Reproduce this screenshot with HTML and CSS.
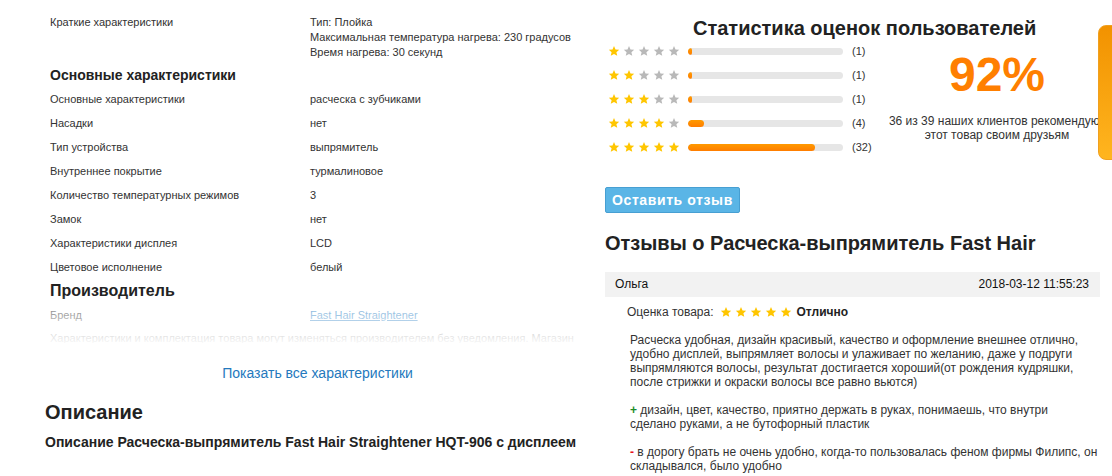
FILE: index.html
```html
<!DOCTYPE html>
<html lang="ru">
<head>
    <meta charset="UTF-8">
    <title>Расческа-выпрямитель Fast Hair Straightener</title>
    <link rel="stylesheet" href="styles.css">
</head>
<body>
    <svg width="0" height="0" class="defs">
        <symbol id="star" viewBox="0 0 24 24">
            <path d="M12 1.8l3 7 7.4.6-5.6 4.9 1.7 7.4L12 17.8l-6.5 3.9 1.7-7.4-5.6-4.9 7.4-.6z"/>
        </symbol>
    </svg>

    <div class="page">
        <div class="left">
            <div class="specs">
                <div class="spec-row">
                    <div class="spec-name">Краткие характеристики</div>
                    <div class="spec-value">Тип: Плойка<br>Максимальная температура нагрева: 230 градусов<br>Время нагрева: 30 секунд</div>
                </div>
                <h3 class="spec-group">Основные характеристики</h3>
                <div class="spec-row"><div class="spec-name">Основные характеристики</div><div class="spec-value">расческа с зубчиками</div></div>
                <div class="spec-row"><div class="spec-name">Насадки</div><div class="spec-value">нет</div></div>
                <div class="spec-row"><div class="spec-name">Тип устройства</div><div class="spec-value">выпрямитель</div></div>
                <div class="spec-row"><div class="spec-name">Внутреннее покрытие</div><div class="spec-value">турмалиновое</div></div>
                <div class="spec-row"><div class="spec-name">Количество температурных режимов</div><div class="spec-value">3</div></div>
                <div class="spec-row"><div class="spec-name">Замок</div><div class="spec-value">нет</div></div>
                <div class="spec-row"><div class="spec-name">Характеристики дисплея</div><div class="spec-value">LCD</div></div>
                <div class="spec-row"><div class="spec-name">Цветовое исполнение</div><div class="spec-value">белый</div></div>
                <h3 class="spec-group big">Производитель</h3>
                <div class="spec-row"><div class="spec-name">Бренд</div><div class="spec-value"><a href="#">Fast Hair Straightener</a></div></div>
                <p class="disclaimer">Характеристики и комплектация товара могут изменяться производителем без уведомления. Магазин не несет ответственности за изменения, внесенные производителем.</p>
                <div class="fade"></div>
            </div>
            <a class="show-all" href="#">Показать все характеристики</a>
            <h2 class="desc-title">Описание</h2>
            <h4 class="desc-sub">Описание Расческа-выпрямитель Fast Hair Straightener HQT-906 с дисплеем</h4>
        </div>

        <div class="right">
            <h2 class="stats-title">Статистика оценок пользователей</h2>
            <div class="stats">
                <div class="rows" id="rows"></div>
                <div class="recommend">
                    <div class="percent">92%</div>
                    <div class="rec-text">36 из 39 наших клиентов рекомендуют<br>этот товар своим друзьям</div>
                </div>
            </div>

            <button class="btn-review">Оставить отзыв</button>

            <h2 class="reviews-title">Отзывы о Расческа-выпрямитель Fast Hair</h2>

            <div class="review">
                <div class="review-head">
                    <span class="author">Ольга</span>
                    <span class="date">2018-03-12 11:55:23</span>
                </div>
                <div class="review-rating">
                    Оценка товара:
                    <span class="stars">
                        <svg class="on"><use href="#star"/></svg><svg class="on"><use href="#star"/></svg><svg class="on"><use href="#star"/></svg><svg class="on"><use href="#star"/></svg><svg class="on"><use href="#star"/></svg>
                    </span>
                    <b>Отлично</b>
                </div>
                <div class="review-text">
                    <p>Расческа удобная, дизайн красивый, качество и оформление внешнее отлично, удобно дисплей, выпрямляет волосы и улаживает по желанию, даже у подруги выпрямляются волосы, результат достигается хороший(от рождения кудряшки, после стрижки и окраски волосы все равно вьются)</p>
                    <p><span class="plus">+</span> дизайн, цвет, качество, приятно держать в руках, понимаешь, что внутри<br>сделано руками, а не бутофорный пластик</p>
                    <p><span class="minus">-</span> в дорогу брать не очень удобно, когда-то пользовалась феном фирмы Филипс, он складывался, было удобно</p>
                </div>
            </div>
        </div>
    </div>

    <div class="side-tab"></div>

    <script>
        const votes = [1, 1, 1, 4, 32];
        const total = 39;
        const rows = document.getElementById("rows");
        votes.forEach((count, i) => {
            let row = document.createElement("div");
            row.className = "rate-row";
            let stars = "";
            for (let s = 0; s < 5; s++) {
                stars += '<svg class="' + (s <= i ? "on" : "off") + '"><use href="#star"/></svg>';
            }
            let w = Math.max(4, Math.round(count / total * 155));
            row.innerHTML = '<span class="stars">' + stars + '</span>' +
                '<span class="bar"><span class="fill" style="width:' + w + 'px"></span></span>' +
                '<span class="count">(' + count + ')</span>';
            rows.appendChild(row);
        });
    </script>
</body>
</html>
```

FILE: styles.css
```css
body { margin: 0; font-family: "Liberation Sans", Arial, sans-serif; color: #333; background: #fff; overflow: hidden; }
.defs { position: absolute; }
.page { display: flex; }

/* left column */
.left { width: 590px; box-sizing: border-box; padding: 10px 0 0 45px; flex-shrink: 0; }
.specs { position: relative; height: 333px; overflow: hidden; padding: 0 12px 0 5px; }
.spec-row { display: flex; font-size: 11px; line-height: 15px; padding: 4.5px 0; }
.spec-name { width: 260px; flex-shrink: 0; }
.spec-value a { color: #2a7fc4; }
.spec-group { margin: 0; font-size: 14px; line-height: 23px; color: #222; }
.spec-group.big { font-size: 16px; line-height: 24px; }
.disclaimer { margin: 0; padding-top: 4px; font-size: 11px; line-height: 15px; }
.fade {
    position: absolute; left: 0; right: 0; bottom: 0; height: 48px;
    background: linear-gradient(rgba(255,255,255,0), rgba(255,255,255,.55) 40%, rgba(255,255,255,.96));
}
.show-all { display: block; margin-top: 20px; text-align: center; font-size: 14px; line-height: 20px; color: #2479bd; text-decoration: none; }
.desc-title { margin: 17px 0 0; font-size: 20px; line-height: 24px; color: #222; }
.desc-sub { margin: 9px 0 0; font-size: 14px; line-height: 18px; color: #222; }

/* right column */
.right { width: 495px; margin-left: 15px; flex-shrink: 0; }
.stats-title { margin: 0 0 0 88px; padding-top: 17px; font-size: 20px; line-height: 22px; color: #222; white-space: nowrap; }
.stats { display: flex; }
.rows { width: 280px; flex-shrink: 0; }
.rate-row { display: flex; align-items: center; height: 24px; }
.stars { display: flex; gap: 3px; margin-left: 3px; }
.stars svg { width: 12px; height: 12px; }
.stars .on { fill: #ffc600; }
.stars .off { fill: #b9b9b9; }
.bar { width: 155px; height: 7px; margin-left: 8px; background: #e6e6e6; border-radius: 4px; overflow: hidden; }
.fill { display: block; height: 100%; border-radius: 4px; background: linear-gradient(#ff9a00, #ff7d00); }
.count { margin-left: 9px; font-size: 11px; }
.recommend { width: 224px; flex-shrink: 0; text-align: center; padding-top: 8px; }
.percent { font-size: 48px; line-height: 56px; font-weight: bold; color: #ff7f00; }
.rec-text { margin-top: 11px; font-size: 12px; line-height: 14px; white-space: nowrap; }

.btn-review {
    display: block; margin-top: 28px; height: 26px; padding: 0 6px;
    background: #5ab5e6; border: 1px solid #479fd2; border-radius: 2px;
    color: #fff; font-family: inherit; font-size: 14px; font-weight: bold; letter-spacing: 0.6px;
}
.reviews-title { margin: 18px 0 0; font-size: 20px; line-height: 24px; color: #222; white-space: nowrap; }

.review { margin-top: 17px; }
.review-head { display: flex; justify-content: space-between; height: 25px; line-height: 25px; padding: 0 11px 0 10px; background: #f2f2f2; font-size: 12px; color: #111; }
.review-rating { display: flex; align-items: center; gap: 5px; margin: 7px 0 0 22px; font-size: 12px; line-height: 16px; }
.review-rating .stars { margin: 0 0 0 1px; }
.review-rating b { color: #222; }
.review-text { margin: 13px 0 0 25px; width: 472px; font-size: 12px; line-height: 14px; }
.review-text p { margin: 0 0 14px; }
.plus { color: #1c8c2a; font-weight: bold; }
.minus { color: #e8141e; font-weight: bold; }

.side-tab {
    position: fixed; top: 25px; right: -20px; width: 32px; height: 133px;
    border-radius: 8px; border: 1px solid #f0a020;
    background: linear-gradient(#f29200, #ffb51f);
}
```
